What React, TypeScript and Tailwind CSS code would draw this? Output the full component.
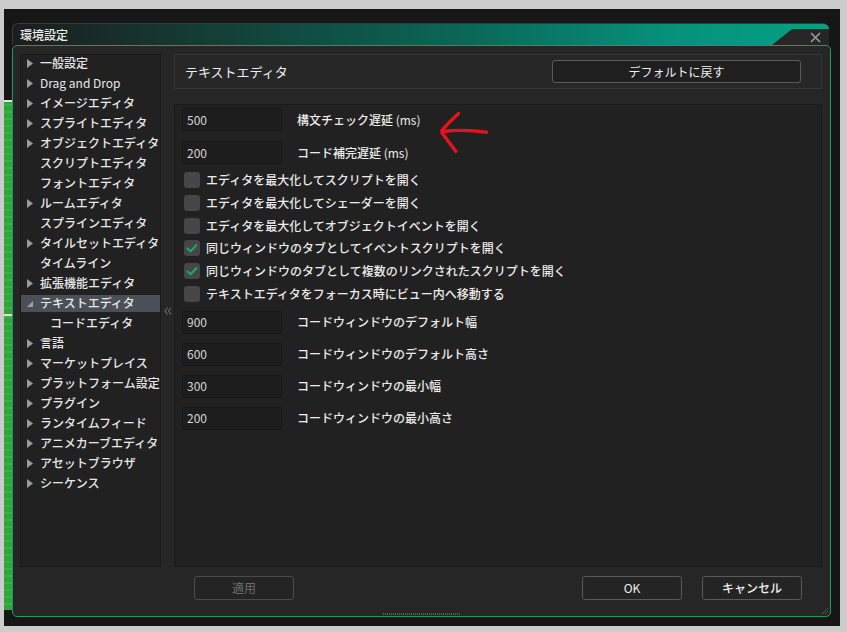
import React from "react";

type TreeItem = { label: string; kind: "arrow" | "none" | "open" | "child"; selected?: boolean; latin?: boolean };

const tree: TreeItem[] = [
  { label: "一般設定", kind: "arrow" },
  { label: "Drag and Drop", kind: "arrow", latin: true },
  { label: "イメージエディタ", kind: "arrow" },
  { label: "スプライトエディタ", kind: "arrow" },
  { label: "オブジェクトエディタ", kind: "arrow" },
  { label: "スクリプトエディタ", kind: "none" },
  { label: "フォントエディタ", kind: "none" },
  { label: "ルームエディタ", kind: "arrow" },
  { label: "スプラインエディタ", kind: "none" },
  { label: "タイルセットエディタ", kind: "arrow" },
  { label: "タイムライン", kind: "none" },
  { label: "拡張機能エディタ", kind: "arrow" },
  { label: "テキストエディタ", kind: "open", selected: true },
  { label: "コードエディタ", kind: "child" },
  { label: "言語", kind: "arrow" },
  { label: "マーケットプレイス", kind: "arrow" },
  { label: "プラットフォーム設定", kind: "arrow" },
  { label: "プラグイン", kind: "arrow" },
  { label: "ランタイムフィード", kind: "arrow" },
  { label: "アニメカーブエディタ", kind: "arrow" },
  { label: "アセットブラウザ", kind: "arrow" },
  { label: "シーケンス", kind: "arrow" },
];

function RightTri() {
  return (
    <svg width="6" height="9" viewBox="0 0 6 9" className="shrink-0">
      <path d="M0 0 L6 4.5 L0 9 Z" fill="#9c9c9c" />
    </svg>
  );
}

function OpenTri() {
  return (
    <svg width="6" height="9" viewBox="0 0 6 9" className="shrink-0">
      <path d="M6 2 L6 8 L0 8 Z" fill="#a0a0a0" />
    </svg>
  );
}

function NumInput({ value }: { value: string }) {
  return (
    <div className="w-[100px] h-[23px] bg-[#1d1d1d] border border-[#181818] rounded-[2px] pl-[4px] flex items-center text-[12px] text-[#d6d6d6] shrink-0">
      {value}
    </div>
  );
}

function InputRow({ value, label, ms, className }: { value: string; label: string; ms?: boolean; className?: string }) {
  return (
    <div className={"flex items-center h-[23px] " + (className ?? "")}>
      <NumInput value={value} />
      <span className="ml-[15px] text-[12px] font-medium text-[#ececec]">
        {label}
        {ms && <span className="font-normal"> (ms)</span>}
      </span>
    </div>
  );
}

function CheckRow({ checked, label }: { checked: boolean; label: string }) {
  return (
    <div className="flex items-center h-[22.67px] pl-[2px]">
      <div className="w-[16px] h-[16px] rounded-[3px] bg-[#464646] flex items-center justify-center shrink-0">
        {checked && (
          <svg width="16" height="16" viewBox="0 0 16 16">
            <path d="M3.5 8.5 L6.6 11.3 L12.3 5.2" fill="none" stroke="#19a866" strokeWidth="2.2" strokeLinecap="round" strokeLinejoin="round" />
          </svg>
        )}
      </div>
      <span className="ml-[6px] text-[12px] font-medium text-[#ececec]">{label}</span>
    </div>
  );
}

export default function App() {
  return (
    <div className="w-[847px] h-[632px] bg-[#cccccc] pt-[9px] pl-[4px] pr-[7px] pb-[6px] font-['Noto_Sans_CJK_JP','Noto_Sans',sans-serif] overflow-hidden">
      <div className="h-full bg-[#161616] flex">
        {/* background window strip */}
        <div className="w-[8px] flex flex-col shrink-0">
          <div className="h-[91px]" />
          <div className="h-[2px] bg-[#e6e6e6]" />
          <div className="h-[212px] bg-[repeating-linear-gradient(0deg,#2fa53b_0px,#2fa53b_5px,#3ab046_5px,#3ab046_7px)]" />
          <div className="h-[2px] bg-[#e0e0e0]" />
          <div className="h-[294px] bg-[repeating-linear-gradient(0deg,#2fa53b_0px,#2fa53b_5px,#3ab046_5px,#3ab046_7px)]" />
        </div>

        {/* dialog */}
        <div className="w-[819px] mt-[14px] mb-[9px] flex flex-col">
          {/* title bar */}
          <div className="relative h-[22px] mr-[2px] rounded-t-[6px] border-t border-l border-[#3a3a3a] bg-[linear-gradient(90deg,#1b1d1d_0%,#133f37_25%,#0b6656_55%,#06907a_80%,#04a283_100%)] flex items-center pl-[7px]">
            <span className="text-[12px] font-medium text-[#eeeeee]">環境設定</span>
            <div className="absolute right-0 top-[5px] bottom-0 w-[57px] bg-[#262626] [clip-path:polygon(20px_0,100%_0,100%_100%,0_100%)] flex items-center justify-end pr-[8px]">
              <svg width="11" height="11" viewBox="0 0 11 11">
                <path d="M1 1 L10 10 M10 1 L1 10" stroke="#9a9a9a" strokeWidth="1.6" />
              </svg>
            </div>
          </div>

          {/* body */}
          <div className="relative flex-1 flex flex-col bg-[#262626] border border-[#1f9a60] rounded-[5px] pt-[8px] pl-[7px] pr-[8px] pb-[16px]">
            <div className="flex-1 flex min-h-0">
              {/* tree */}
              <div className="w-[141px] bg-[#212121] border border-[#1a1a1a] flex flex-col shrink-0 pt-0 overflow-hidden">
                <div className="-mt-[2px] flex flex-col">
                  {tree.map((it) => (
                    <div key={it.label} className="h-[20px] flex items-center">
                      <div
                        className={
                          "w-full h-[17px] flex items-center " +
                          (it.selected ? "bg-[#4b4f57]" : "") +
                          (it.kind === "child" ? " pl-[29px]" : " pl-[6px]")
                        }
                      >
                        {it.kind === "arrow" && <RightTri />}
                        {it.kind === "open" && <OpenTri />}
                        {it.kind === "none" && <div className="w-[6px] shrink-0" />}
                        <span
                          className={
                            "text-[12px] text-[#e8e8e8] whitespace-nowrap " +
                            (it.latin ? "font-normal " : "font-medium ") +
                            (it.kind === "child" ? "" : "ml-[7px]")
                          }
                        >
                          {it.label}
                        </span>
                      </div>
                    </div>
                  ))}
                </div>
              </div>

              {/* splitter */}
              <div className="w-[13px] flex items-center justify-center shrink-0">
                <svg width="8" height="8" viewBox="0 0 8 8">
                  <path d="M3.5 0.5 L1 4 L3.5 7.5 M7 0.5 L4.5 4 L7 7.5" fill="none" stroke="#7a7a7a" strokeWidth="1" />
                </svg>
              </div>

              {/* right side */}
              <div className="flex-1 flex flex-col min-w-0">
                <div className="h-[35px] border border-[#363636] bg-[#272727] flex items-center justify-between pl-[10px] pr-[20px] shrink-0">
                  <span className="text-[13px] text-[#eeeeee]">テキストエディタ</span>
                  <div className="w-[249px] h-[23px] border border-[#5a5a5a] rounded-[3px] bg-[#1f1f1f] flex items-center justify-center text-[12px] text-[#eeeeee]">
                    デフォルトに戻す
                  </div>
                </div>

                <div className="relative mt-[15px] flex-1 bg-[#212121] border border-[#1a1a1a] pt-[3px] pl-[7px] flex flex-col">
                  <InputRow value="500" label="構文チェック遅延" ms />
                  <InputRow value="200" label="コード補完遅延" ms className="mt-[10px]" />
                  <div className="mt-[4.9px] flex flex-col">
                    <CheckRow checked={false} label="エディタを最大化してスクリプトを開く" />
                    <CheckRow checked={false} label="エディタを最大化してシェーダーを開く" />
                    <CheckRow checked={false} label="エディタを最大化してオブジェクトイベントを開く" />
                    <CheckRow checked={true} label="同じウィンドウのタブとしてイベントスクリプトを開く" />
                    <CheckRow checked={true} label="同じウィンドウのタブとして複数のリンクされたスクリプトを開く" />
                    <CheckRow checked={false} label="テキストエディタをフォーカス時にビュー内へ移動する" />
                  </div>
                  <InputRow value="900" label="コードウィンドウのデフォルト幅" className="mt-[5.8px]" />
                  <InputRow value="600" label="コードウィンドウのデフォルト高さ" className="mt-[9px]" />
                  <InputRow value="300" label="コードウィンドウの最小幅" className="mt-[9px]" />
                  <InputRow value="200" label="コードウィンドウの最小高さ" className="mt-[9px]" />

                  {/* red annotation arrow */}
                  <svg className="absolute left-[264px] top-[4px]" width="52" height="50" viewBox="0 0 52 50">
                    <path
                      d="M19.5 4.5 Q10 13 2.8 21.5 M2.8 23.5 Q9 32 17 42.5 M3.5 22.5 Q25 20 47.5 23.2"
                      fill="none"
                      stroke="#e3151a"
                      strokeWidth="3.4"
                      strokeLinecap="round"
                      strokeLinejoin="round"
                    />
                  </svg>
                </div>
              </div>
            </div>

            {/* bottom buttons */}
            <div className="mt-[9px] h-[24px] flex pl-[174px] pr-[20px] shrink-0">
              <div className="w-[100px] h-[24px] border border-[#4a4a4a] rounded-[3px] bg-[#242424] flex items-center justify-center text-[12px] text-[#6e6e6e]">
                適用
              </div>
              <div className="flex-1" />
              <div className="w-[100px] h-[24px] border border-[#5a5a5a] rounded-[3px] bg-[#242424] flex items-center justify-center text-[12px] text-[#eeeeee]">
                OK
              </div>
              <div className="ml-[20px] w-[100px] h-[24px] border border-[#5a5a5a] rounded-[3px] bg-[#242424] flex items-center justify-center text-[12px] font-medium text-[#eeeeee]">
                キャンセル
              </div>
            </div>

            {/* resize grips */}
            <div className="absolute bottom-[1px] left-[370px] w-[77px] h-[2px] bg-[repeating-linear-gradient(90deg,#5a5a5a_0px,#5a5a5a_1px,transparent_1px,transparent_2px)]" />
            <svg className="absolute right-[1px] bottom-[1px]" width="8" height="8" viewBox="0 0 8 8">
              <path d="M7 1 L1 7 M7 4 L4 7" stroke="#555" strokeWidth="1" />
            </svg>
          </div>
        </div>
      </div>
    </div>
  );
}
